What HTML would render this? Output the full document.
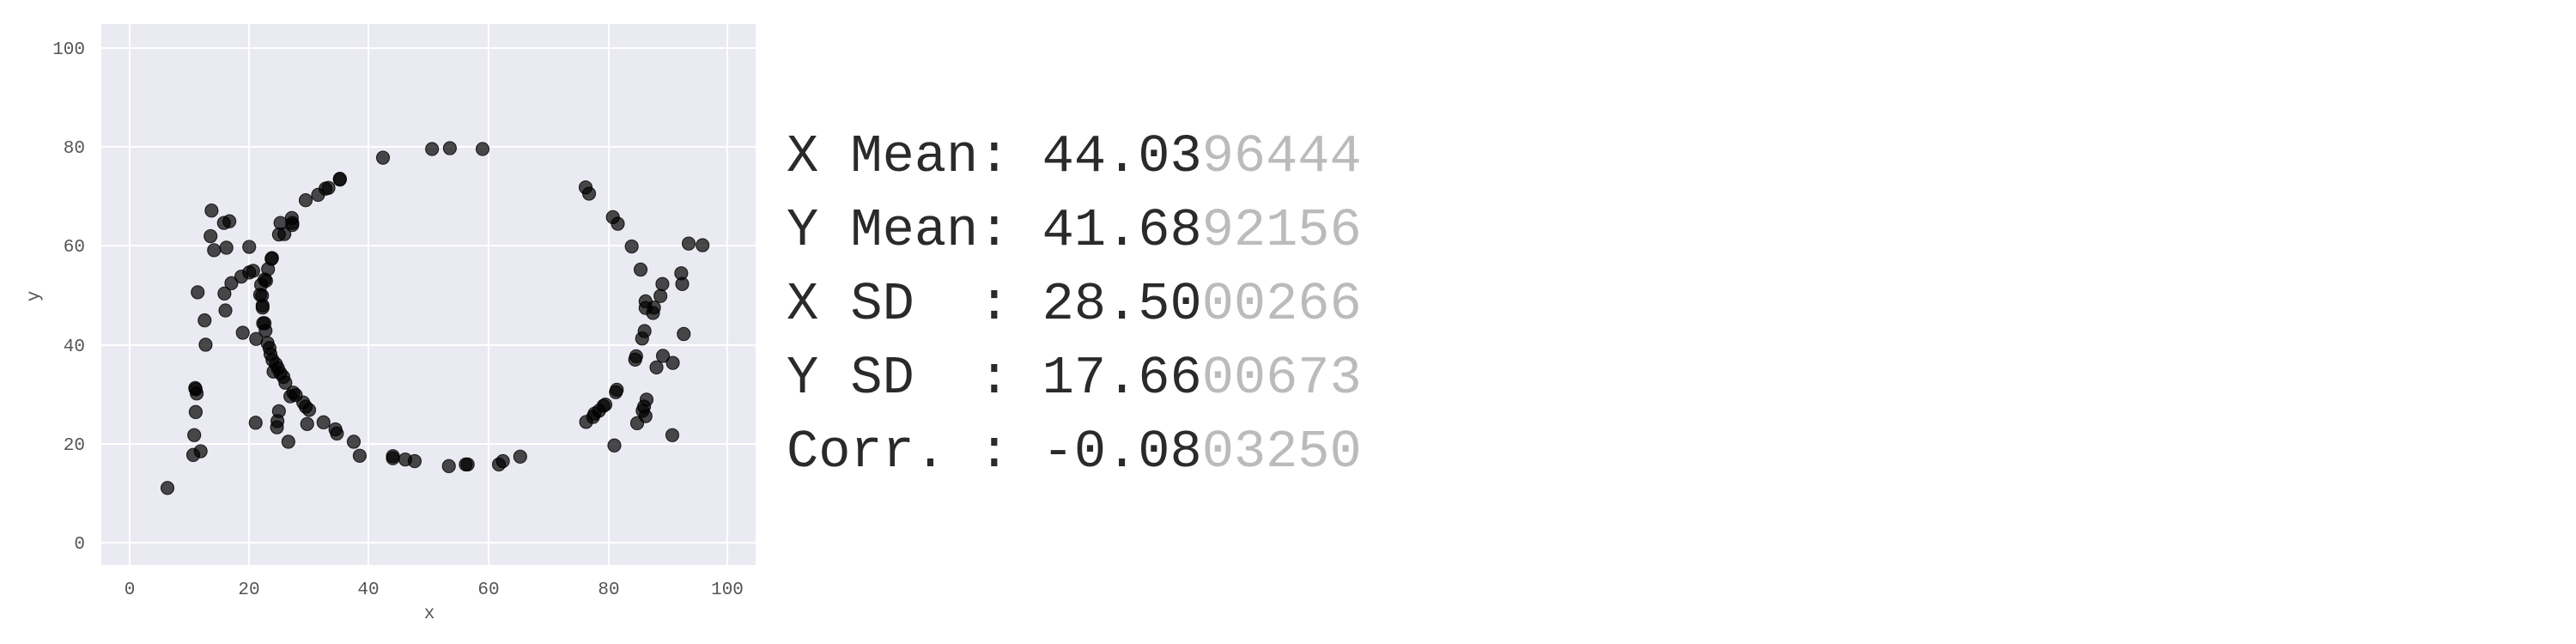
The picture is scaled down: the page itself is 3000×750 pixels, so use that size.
<!DOCTYPE html>
<html><head><meta charset="utf-8"><style>
html,body{margin:0;padding:0;background:#fff;width:3000px;height:750px;overflow:hidden}
svg{display:block}
.t{font-family:"Liberation Mono",monospace;font-size:21px;fill:#555}
.s{font-family:"Liberation Mono",monospace;font-size:62px;fill:#2a2a2a;white-space:pre}
.g{fill:#bbb}
</style></head><body>
<svg width="3000" height="750" viewBox="0 0 3000 750" xmlns="http://www.w3.org/2000/svg">
<rect x="118" y="28" width="762" height="630" fill="#eaeaf2"/>
<g stroke="#fff" stroke-width="2">
<line x1="151" y1="28" x2="151" y2="658"/><line x1="290" y1="28" x2="290" y2="658"/>
<line x1="429" y1="28" x2="429" y2="658"/><line x1="569" y1="28" x2="569" y2="658"/>
<line x1="709" y1="28" x2="709" y2="658"/><line x1="847" y1="28" x2="847" y2="658"/>
<line x1="118" y1="56" x2="880" y2="56"/><line x1="118" y1="171" x2="880" y2="171"/>
<line x1="118" y1="286" x2="880" y2="286"/><line x1="118" y1="402" x2="880" y2="402"/>
<line x1="118" y1="517" x2="880" y2="517"/><line x1="118" y1="632" x2="880" y2="632"/>
</g>
<g class="t" text-anchor="end">
<text x="99" y="63">100</text><text x="99" y="178">80</text><text x="99" y="293">60</text>
<text x="99" y="409">40</text><text x="99" y="524">20</text><text x="99" y="639">0</text>
</g>
<g class="t" text-anchor="middle">
<text x="151" y="692">0</text><text x="290" y="692">20</text><text x="429" y="692">40</text>
<text x="569" y="692">60</text><text x="709" y="692">80</text><text x="847" y="692">100</text>
<text x="500" y="720">x</text>
<text transform="translate(45,345) rotate(-90)">y</text>
</g>
<g transform="scale(0.577,0.4808)" fill="#000" fill-opacity="0.7" stroke="#000" stroke-opacity="0.8" stroke-width="2">
<ellipse cx="338" cy="1182" rx="13" ry="16"/><ellipse cx="390" cy="1102" rx="13" ry="16"/><ellipse cx="405" cy="1093" rx="13" ry="16"/><ellipse cx="392" cy="1054" rx="13" ry="16"/><ellipse cx="395" cy="998" rx="13" ry="16"/><ellipse cx="397" cy="953" rx="13" ry="16"/><ellipse cx="395" cy="943" rx="13" ry="16"/><ellipse cx="394" cy="940" rx="13" ry="16"/><ellipse cx="399" cy="708" rx="13" ry="16"/><ellipse cx="413" cy="776" rx="13" ry="16"/><ellipse cx="415" cy="835" rx="13" ry="16"/><ellipse cx="427" cy="510" rx="13" ry="16"/><ellipse cx="425" cy="572" rx="13" ry="16"/><ellipse cx="432" cy="606" rx="13" ry="16"/><ellipse cx="452" cy="540" rx="13" ry="16"/><ellipse cx="463" cy="536" rx="13" ry="16"/><ellipse cx="457" cy="600" rx="13" ry="16"/><ellipse cx="453" cy="711" rx="13" ry="16"/><ellipse cx="455" cy="752" rx="13" ry="16"/><ellipse cx="467" cy="686" rx="13" ry="16"/><ellipse cx="487" cy="670" rx="13" ry="16"/><ellipse cx="490" cy="806" rx="13" ry="16"/><ellipse cx="503" cy="598" rx="13" ry="16"/><ellipse cx="503" cy="660" rx="13" ry="16"/><ellipse cx="511" cy="656" rx="13" ry="16"/><ellipse cx="517" cy="821" rx="13" ry="16"/><ellipse cx="516" cy="1024" rx="13" ry="16"/><ellipse cx="525" cy="714" rx="13" ry="16"/><ellipse cx="527" cy="690" rx="13" ry="16"/><ellipse cx="530" cy="745" rx="13" ry="16"/><ellipse cx="530" cy="740" rx="13" ry="16"/><ellipse cx="531" cy="783" rx="13" ry="16"/><ellipse cx="534" cy="783" rx="13" ry="16"/><ellipse cx="536" cy="801" rx="13" ry="16"/><ellipse cx="537" cy="680" rx="13" ry="16"/><ellipse cx="541" cy="652" rx="13" ry="16"/><ellipse cx="548" cy="627" rx="13" ry="16"/><ellipse cx="549" cy="625" rx="13" ry="16"/><ellipse cx="529" cy="716" rx="13" ry="16"/><ellipse cx="534" cy="677" rx="13" ry="16"/><ellipse cx="540" cy="831" rx="13" ry="16"/><ellipse cx="544" cy="843" rx="13" ry="16"/><ellipse cx="546" cy="858" rx="13" ry="16"/><ellipse cx="550" cy="872" rx="13" ry="16"/><ellipse cx="552" cy="900" rx="13" ry="16"/><ellipse cx="557" cy="882" rx="13" ry="16"/><ellipse cx="561" cy="892" rx="13" ry="16"/><ellipse cx="566" cy="904" rx="13" ry="16"/><ellipse cx="572" cy="913" rx="13" ry="16"/><ellipse cx="576" cy="927" rx="13" ry="16"/><ellipse cx="566" cy="540" rx="13" ry="16"/><ellipse cx="563" cy="568" rx="13" ry="16"/><ellipse cx="574" cy="567" rx="13" ry="16"/><ellipse cx="589" cy="528" rx="13" ry="16"/><ellipse cx="590" cy="540" rx="13" ry="16"/><ellipse cx="590" cy="545" rx="13" ry="16"/><ellipse cx="586" cy="960" rx="13" ry="16"/><ellipse cx="592" cy="951" rx="13" ry="16"/><ellipse cx="597" cy="957" rx="13" ry="16"/><ellipse cx="612" cy="975" rx="13" ry="16"/><ellipse cx="617" cy="985" rx="13" ry="16"/><ellipse cx="624" cy="993" rx="13" ry="16"/><ellipse cx="620" cy="1027" rx="13" ry="16"/><ellipse cx="582" cy="1070" rx="13" ry="16"/><ellipse cx="559" cy="1035" rx="13" ry="16"/><ellipse cx="560" cy="1020" rx="13" ry="16"/><ellipse cx="563" cy="996" rx="13" ry="16"/><ellipse cx="617" cy="485" rx="13" ry="16"/><ellipse cx="642" cy="472" rx="13" ry="16"/><ellipse cx="657" cy="457" rx="13" ry="16"/><ellipse cx="663" cy="455" rx="13" ry="16"/><ellipse cx="686" cy="433" rx="13" ry="16"/><ellipse cx="686" cy="435" rx="13" ry="16"/><ellipse cx="653" cy="1023" rx="13" ry="16"/><ellipse cx="677" cy="1040" rx="13" ry="16"/><ellipse cx="680" cy="1050" rx="13" ry="16"/><ellipse cx="714" cy="1070" rx="13" ry="16"/><ellipse cx="726" cy="1104" rx="13" ry="16"/><ellipse cx="773" cy="382" rx="13" ry="16"/><ellipse cx="872" cy="361" rx="13" ry="16"/><ellipse cx="908" cy="359" rx="13" ry="16"/><ellipse cx="974" cy="361" rx="13" ry="16"/><ellipse cx="793" cy="1105" rx="13" ry="16"/><ellipse cx="793" cy="1110" rx="13" ry="16"/><ellipse cx="818" cy="1113" rx="13" ry="16"/><ellipse cx="837" cy="1117" rx="13" ry="16"/><ellipse cx="906" cy="1129" rx="13" ry="16"/><ellipse cx="940" cy="1125" rx="13" ry="16"/><ellipse cx="944" cy="1125" rx="13" ry="16"/><ellipse cx="1007" cy="1125" rx="13" ry="16"/><ellipse cx="1015" cy="1117" rx="13" ry="16"/><ellipse cx="1050" cy="1106" rx="13" ry="16"/><ellipse cx="1182" cy="454" rx="13" ry="16"/><ellipse cx="1189" cy="469" rx="13" ry="16"/><ellipse cx="1237" cy="526" rx="13" ry="16"/><ellipse cx="1247" cy="542" rx="13" ry="16"/><ellipse cx="1275" cy="597" rx="13" ry="16"/><ellipse cx="1293" cy="653" rx="13" ry="16"/><ellipse cx="1303" cy="730" rx="13" ry="16"/><ellipse cx="1303" cy="746" rx="13" ry="16"/><ellipse cx="1320" cy="745" rx="13" ry="16"/><ellipse cx="1318" cy="758" rx="13" ry="16"/><ellipse cx="1333" cy="717" rx="13" ry="16"/><ellipse cx="1337" cy="688" rx="13" ry="16"/><ellipse cx="1301" cy="802" rx="13" ry="16"/><ellipse cx="1296" cy="820" rx="13" ry="16"/><ellipse cx="1284" cy="863" rx="13" ry="16"/><ellipse cx="1282" cy="871" rx="13" ry="16"/><ellipse cx="1325" cy="890" rx="13" ry="16"/><ellipse cx="1338" cy="862" rx="13" ry="16"/><ellipse cx="1358" cy="879" rx="13" ry="16"/><ellipse cx="1380" cy="809" rx="13" ry="16"/><ellipse cx="1377" cy="688" rx="13" ry="16"/><ellipse cx="1375" cy="662" rx="13" ry="16"/><ellipse cx="1390" cy="590" rx="13" ry="16"/><ellipse cx="1418" cy="594" rx="13" ry="16"/><ellipse cx="1245" cy="944" rx="13" ry="16"/><ellipse cx="1243" cy="950" rx="13" ry="16"/><ellipse cx="1222" cy="980" rx="13" ry="16"/><ellipse cx="1218" cy="983" rx="13" ry="16"/><ellipse cx="1209" cy="995" rx="13" ry="16"/><ellipse cx="1200" cy="1002" rx="13" ry="16"/><ellipse cx="1197" cy="1010" rx="13" ry="16"/><ellipse cx="1183" cy="1022" rx="13" ry="16"/><ellipse cx="1305" cy="968" rx="13" ry="16"/><ellipse cx="1300" cy="985" rx="13" ry="16"/><ellipse cx="1297" cy="995" rx="13" ry="16"/><ellipse cx="1303" cy="1008" rx="13" ry="16"/><ellipse cx="1286" cy="1025" rx="13" ry="16"/><ellipse cx="1240" cy="1079" rx="13" ry="16"/><ellipse cx="1357" cy="1054" rx="13" ry="16"/>
</g>
<g class="s">
<text x="916" y="199">X Mean: 44.03<tspan class="g">96444</tspan></text>
<text x="916" y="285">Y Mean: 41.68<tspan class="g">92156</tspan></text>
<text x="916" y="371">X SD&#160;&#160;: 28.50<tspan class="g">00266</tspan></text>
<text x="916" y="457">Y SD&#160;&#160;: 17.66<tspan class="g">00673</tspan></text>
<text x="916" y="543">Corr. : -0.08<tspan class="g">03250</tspan></text>
</g>
</svg>
</body></html>
